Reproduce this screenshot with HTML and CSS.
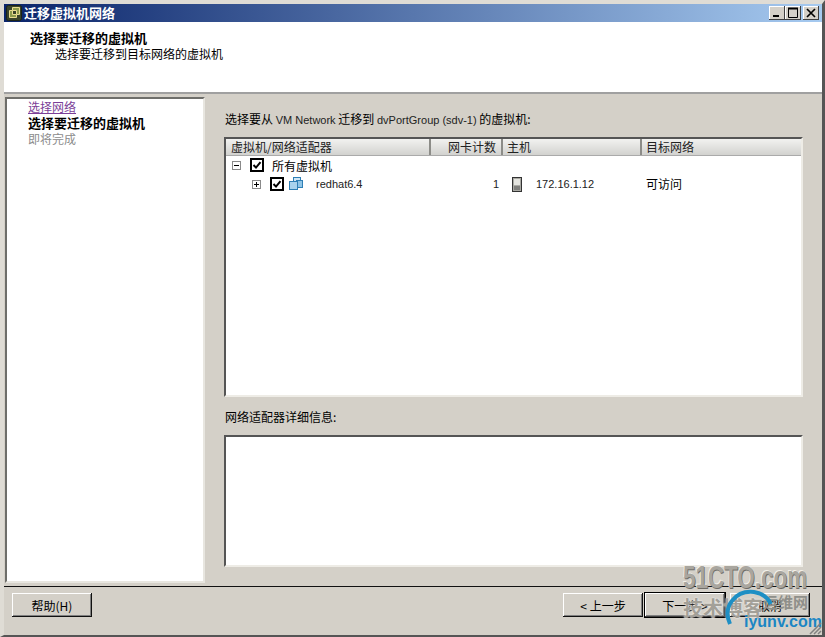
FILE: index.html
```html
<!DOCTYPE html>
<html lang="zh">
<head>
<meta charset="utf-8">
<title>迁移虚拟机网络</title>
<link rel="stylesheet" href="styles.css">
</head>
<body>
<div class="window">
  <div class="titlebar">
    <svg class="appicon" width="16" height="16" viewBox="0 0 16 16"><rect x="0.5" y="0.5" width="15" height="15" rx="2" fill="#39432a" stroke="#1d2416"/><path d="M6.5 2.5h7v7h-3v3h-7v-7h3z" fill="#8c9a4c" stroke="#e8dc90"/><path d="M6.5 5.5h4v4h-4z" fill="#39432a" stroke="#e8dc90"/></svg>
    <span class="title">迁移虚拟机网络</span>
    <div class="winbtns">
      <span class="winbtn"><svg width="16" height="14" viewBox="0 0 16 14"><rect x="4" y="9" width="6" height="2" fill="#000"/></svg></span>
      <span class="winbtn"><svg width="16" height="14" viewBox="0 0 16 14"><path d="M3.5 2.5h9v9h-9z" fill="none" stroke="#000"/><path d="M3 2.5h10" stroke="#000" stroke-width="2"/></svg></span>
      <span class="winbtn winbtn-close"><svg width="16" height="14" viewBox="0 0 16 14"><path d="M4 3l8 8M12 3l-8 8" stroke="#000" stroke-width="1.7"/></svg></span>
    </div>
  </div>
  <header class="header">
    <div class="header-title">选择要迁移的虚拟机</div>
    <div class="header-sub">选择要迁移到目标网络的虚拟机</div>
  </header>
  <main class="main">
    <nav class="steps">
      <a class="step step-done">选择网络</a>
      <div class="step step-current">选择要迁移的虚拟机</div>
      <div class="step step-next">即将完成</div>
    </nav>
    <section class="content">
      <div class="label label-top">选择要从 <span class="latin">VM Network</span> 迁移到 <span class="latin">dvPortGroup (sdv-1)</span> 的虚拟机:</div>
      <div class="table">
        <div class="thead">
          <div class="th col-name">虚拟机/网络适配器</div>
          <div class="th col-nic">网卡计数</div>
          <div class="th col-host">主机</div>
          <div class="th col-target">目标网络</div>
        </div>
        <div class="row row-root">
          <span class="expander"><svg width="9" height="9" viewBox="0 0 9 9"><rect x="0.5" y="0.5" width="8" height="8" fill="#fff" stroke="#8a8a8a"/><path d="M2 4.5h5" stroke="#000"/></svg></span>
          <span class="check"><svg width="14" height="14" viewBox="0 0 14 14"><rect x="1" y="1" width="12" height="12" fill="#fff" stroke="#000" stroke-width="2"/><path d="M3.5 7l2.5 2.6L10.5 4.2" fill="none" stroke="#000" stroke-width="2"/></svg></span>
          <span class="root-label">所有虚拟机</span>
        </div>
        <div class="row row-vm">
          <div class="col-name vm-cell">
            <span class="expander"><svg width="9" height="9" viewBox="0 0 9 9"><rect x="0.5" y="0.5" width="8" height="8" fill="#fff" stroke="#8a8a8a"/><path d="M2 4.5h5M4.5 2v5" stroke="#000"/></svg></span>
            <span class="check"><svg width="14" height="14" viewBox="0 0 14 14"><rect x="1" y="1" width="12" height="12" fill="#fff" stroke="#000" stroke-width="2"/><path d="M3.5 7l2.5 2.6L10.5 4.2" fill="none" stroke="#000" stroke-width="2"/></svg></span>
            <svg class="vm-icon" width="14" height="14" viewBox="0 0 14 14"><rect x="4.5" y="0.5" width="7" height="7" fill="#cfe6f5" stroke="#2f7fb5"/><rect x="7.5" y="3.5" width="6" height="7" fill="#8fc4e6" stroke="#2f7fb5"/><rect x="0.5" y="4.5" width="8" height="8" fill="#a9d3ee" stroke="#2f7fb5"/></svg>
            <span class="vm-name latin">redhat6.4</span>
          </div>
          <div class="col-nic nic-cell latin">1</div>
          <div class="col-host host-cell">
            <svg width="10" height="15" viewBox="0 0 10 15"><rect x="0.5" y="0.5" width="9" height="14" fill="#a9a9a3" stroke="#333"/><rect x="2" y="2" width="6" height="6" fill="#e4e4df"/><path d="M2 10h6M2 12h6" stroke="#555"/></svg>
            <span class="latin">172.16.1.12</span>
          </div>
          <div class="col-target target-cell">可访问</div>
        </div>
      </div>
      <div class="label label-detail">网络适配器详细信息:</div>
      <div class="detail"></div>
    </section>
  </main>
  <footer class="footer">
    <button class="btn btn-help">帮助(H)</button>
    <div class="nav-btns">
      <button class="btn">&lt; 上一步</button>
      <button class="btn btn-default">下一步 &gt;</button>
      <button class="btn">取消</button>
    </div>
  </footer>
  <div class="watermark" aria-hidden="true">
    <div class="wm-cto">51CTO.com</div>
    <div class="wm-cn">技术博客</div>
    <div class="wm-cn2">运维网</div>
    <svg class="wm-ring" width="56" height="50" viewBox="0 0 56 50"><path d="M8 38C0 20 14 4 32 6c8 1 14 6 17 12" fill="none" stroke="#1e8fc4" stroke-width="4"/></svg>
    <div class="wm-iyunv">iyunv.com</div>
    <svg class="grip" width="14" height="14" viewBox="0 0 14 14"><path d="M13 2L2 13M13 6L6 13M13 10l-3 3" stroke="#808080" stroke-width="1.5"/></svg>
  </div>
</div>
</body>
</html>
```
FILE: styles.css
```css
* { box-sizing: border-box; }
html, body { margin: 0; padding: 0; height: 100%; overflow: hidden; }
body {
  font-family: "Noto Sans CJK SC", "Liberation Sans", sans-serif;
  font-size: 12px;
  color: #000;
  background: #d4d0c8;
}
.latin { font-family: "Liberation Sans", sans-serif; font-size: 11px; color: #222; }
.window {
  position: relative;
  width: 825px;
  height: 637px;
  display: flex;
  flex-direction: column;
  background: #d4d0c8;
  border-style: solid;
  border-width: 4px 3px 2px 4px;
  border-color: #dfdcd5 #555 #555 #dfdcd5;
}
.titlebar {
  height: 18px;
  flex: none;
  display: flex;
  align-items: center;
  background: linear-gradient(to right, #0a246a, #a6caf0);
  padding-left: 2px;
}
.appicon { flex: none; }
.title { margin-left: 2px; color: #fff; font-weight: 700; font-size: 13px; line-height: 18px; }
.winbtns { margin-left: auto; display: flex; padding-right: 3px; }
.winbtn {
  width: 16px;
  height: 14px;
  display: block;
  background: #d4d0c8;
  box-shadow: inset -1px -1px 0 #404040, inset 1px 1px 0 #fff;
}
.winbtn-close { margin-left: 2px; }
.header {
  height: 72px;
  flex: none;
  background: #fff;
  border-bottom: 2px solid #a0a0a0;
  padding-top: 7px;
  padding-left: 26px;
  line-height: 16px;
}
.header-title { font-weight: 700; font-size: 13px; line-height: 17px; }
.header-sub { margin-left: 25px; }
.main { flex: 1; min-height: 0; display: flex; padding: 3px 0 0 1px; }
.steps {
  width: 200px;
  height: 486px;
  flex: none;
  background: #fff;
  border-style: solid;
  border-width: 2px;
  border-color: #6e6e6a #e8e6e0 #e8e6e0 #6e6e6a;
  padding: 0 0 0 21px;
  line-height: 16px;
}
.step { display: block; }
.step-done { color: #7b3f98; text-decoration: underline; }
.step-current { font-weight: 700; font-size: 13px; }
.step-next { color: #8c8c8c; }
.content { flex: 1; min-width: 0; padding: 14px 0 0 20px; display: flex; flex-direction: column; }
.label { line-height: 16px; }
.label-top { height: 16px; }
.table {
  margin: 10px 0 0 -1px;
  width: 579px;
  height: 260px;
  flex: none;
  background: #fff;
  border-style: solid;
  border-width: 2px;
  border-color: #555 #eeece6 #eeece6 #555;
}
.thead {
  height: 17px;
  display: flex;
  background: linear-gradient(to bottom, #f2f2f0, #d2d2cf);
  border-bottom: 1px solid #aaa;
  line-height: 15px;
}
.th { padding-left: 4px; border-right: 2px solid #8c8c88; color: #222; }
.th.col-name { padding-left: 5px; }
.th.col-nic { text-align: right; padding-right: 5px; }
.th.col-target { border-right: 0; }
.col-name { width: 205px; flex: none; }
.col-nic { width: 72px; flex: none; }
.col-host { width: 139px; flex: none; }
.col-target { flex: 1; }
.row { height: 18px; display: flex; align-items: center; }
.row-root { padding-left: 6px; }
.row-vm { margin-top: 1px; }
.expander { display: flex; width: 9px; height: 9px; }
.check { display: flex; width: 14px; height: 14px; }
.row-root .check { margin-left: 9px; }
.root-label { margin-left: 8px; }
.vm-cell { display: flex; align-items: center; padding-left: 26px; }
.vm-cell .check { margin-left: 9px; }
.vm-icon { margin-left: 5px; flex: none; }
.vm-name { margin-left: 13px; }
.nic-cell { text-align: right; padding-right: 4px; }
.host-cell { display: flex; align-items: center; padding-left: 9px; }
.host-cell .latin { margin-left: 14px; }
.target-cell { padding: 0 0 2px 4px; }
.label-detail { margin-top: 12px; height: 16px; }
.detail {
  margin: 10px 0 0 -1px;
  width: 579px;
  height: 132px;
  flex: none;
  background: #fff;
  border-style: solid;
  border-width: 2px;
  border-color: #555 #eeece6 #eeece6 #555;
}
.footer {
  height: 49px;
  flex: none;
  border-top: 1px solid #111;
  display: flex;
  align-items: flex-start;
  padding: 6px 0 0 8px;
}
.nav-btns { margin-left: auto; display: flex; padding-right: 12px; }
.btn {
  width: 80px;
  height: 24px;
  padding: 0;
  font: inherit;
  color: #000;
  background: #d4d0c8;
  border: 0;
  box-shadow: inset -1px -1px 0 #111, inset 1px 1px 0 #fff, inset -2px -2px 0 #808080;
}
.btn-help { width: 80px; }
.btn-default { margin-left: 2px; box-shadow: 0 0 0 1px #000, inset -1px -1px 0 #404040, inset 1px 1px 0 #fff, inset -2px -2px 0 #808080; }
.btn:last-child { margin-left: 5px; }
.watermark { position: absolute; left: 0; top: 0; width: 100%; height: 100%; pointer-events: none; }
.wm-cto {
  position: absolute; left: 679px; top: 557px;
  font: 700 32px/32px "Liberation Sans", sans-serif;
  color: #a9a69f;
  transform: scaleX(.7);
  transform-origin: left top;
  white-space: nowrap;
  text-shadow: 1px 1px 0 #6f6d68, -1px -1px 0 #f2f0ea;
}
.wm-cn {
  position: absolute; left: 679px; top: 592px;
  font: 700 20px/24px "Noto Sans CJK SC", sans-serif;
  color: #a3a098;
  text-shadow: 0 0 2px #fff;
  white-space: nowrap;
}
.wm-cn2 {
  position: absolute; left: 759px; top: 588px;
  font: 700 15px/20px "Noto Sans CJK SC", sans-serif;
  color: #8f8f8a;
  white-space: nowrap;
}
.wm-ring { position: absolute; left: 718px; top: 582px; }
.wm-iyunv {
  position: absolute; left: 740px; top: 609px;
  font: 700 16px/17px "Liberation Sans", sans-serif;
  color: #1b86c4;
  white-space: nowrap;
}
.grip { position: absolute; right: 0; bottom: 0; }
```
